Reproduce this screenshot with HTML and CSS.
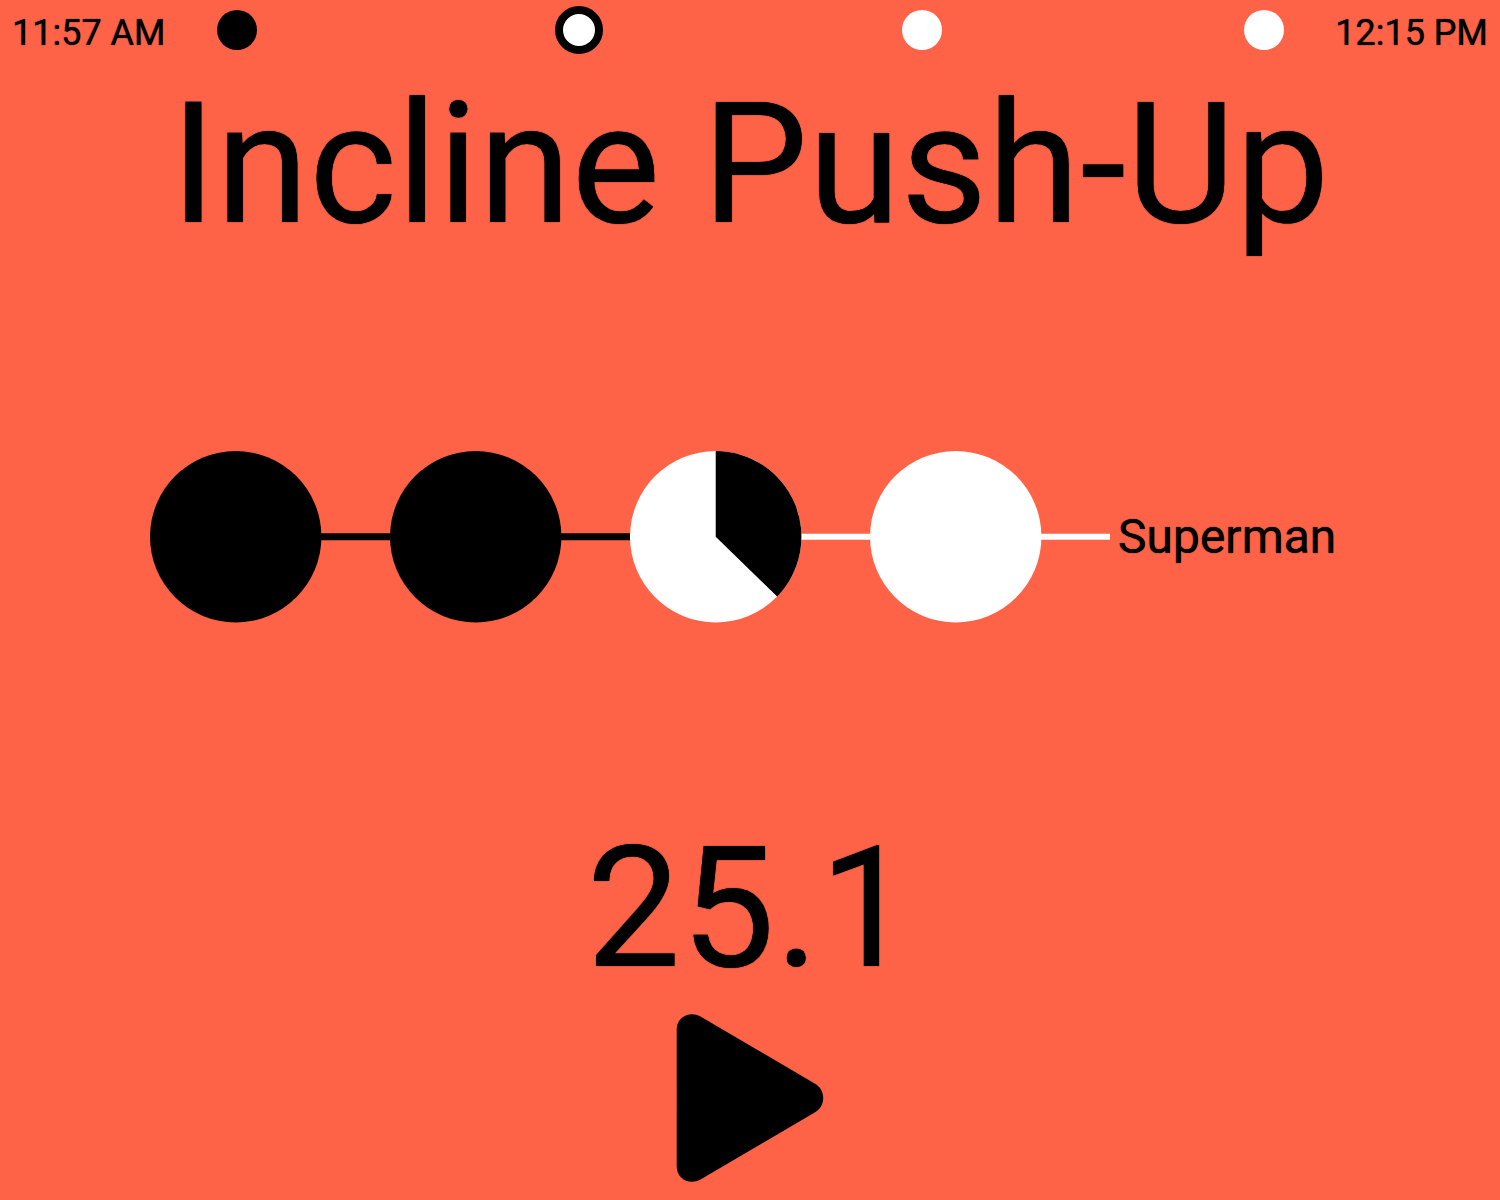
FILE: index.html
```html
<!DOCTYPE html>
<html lang="en">
<head>
<meta charset="utf-8">
<title>Workout timer</title>
<link rel="stylesheet" href="styles.css">
</head>
<body>
<header class="status">
  <time class="clock">11:57 AM</time>
  <ol class="rounds">
    <li class="round done"></li>
    <li class="round current"></li>
    <li class="round"></li>
    <li class="round"></li>
  </ol>
  <time class="clock">12:15 PM</time>
</header>
<main class="workout">
  <h1 class="exercise">Incline Push-Up</h1>
  <section class="sets">
    <svg class="set" viewBox="0 0 280 200" aria-hidden="true">
      <path d="M199 100H280" stroke="#000" stroke-width="8"/>
      <circle cx="100" cy="100" r="100"/>
    </svg>
    <svg class="set" viewBox="0 0 280 200" aria-hidden="true">
      <path d="M199 100H280" stroke="#000" stroke-width="8"/>
      <circle cx="100" cy="100" r="100"/>
    </svg>
    <svg class="set" viewBox="0 0 280 200" aria-hidden="true">
      <path d="M199 100H280" stroke="#fff" stroke-width="7"/>
      <circle cx="100" cy="100" r="100" fill="#fff"/>
      <path d="M100 100V0A100 100 0 0 1 171.700 169.700Z"/>
    </svg>
    <svg class="set" viewBox="0 0 280 200" aria-hidden="true">
      <path d="M199 100H280" stroke="#fff" stroke-width="7"/>
      <circle cx="100" cy="100" r="100" fill="#fff"/>
    </svg>
    <span class="next">Superman</span>
  </section>
  <section class="timer">
    <output class="seconds">25.1</output>
    <button class="play" type="button" aria-label="Start">
      <svg class="play-icon" viewBox="0 0 148 168" aria-hidden="true">
        <path d="M.7 15.500C.7 3 13.500-3.500 24.500 2.500L139.500 70C149.800 76 149.800 92 139.500 98L24.500 165.500C13.500 171.500 .7 165 .7 152.500Z"/>
      </svg>
    </button>
  </section>
</main>
</body>
</html>
```

FILE: styles.css
```css
* {
  box-sizing: border-box;
}

body {
  display: flex;
  flex-direction: column;
  min-height: 100vh;
  margin: 0;
  background: #ff6347;
  color: #000;
  font-family: Roboto, sans-serif;
  text-shadow: 0 0 1px #000;
}

.status {
  display: flex;
  align-items: center;
  justify-content: space-between;
  height: 60px;
  padding: 0 12px;
}

.clock {
  padding-top: 6px;
  font-size: 36px;
  line-height: 42px;
}

.rounds {
  display: flex;
  flex: 1;
  justify-content: space-between;
  align-items: center;
  margin: 0;
  padding: 0 51px;
  list-style: none;
}

.round {
  width: 40px;
  height: 40px;
  border-radius: 50%;
  background: #fff;
}

.done {
  background: #000;
}

.current {
  width: 48px;
  height: 48px;
  margin: 0 -4px;
  border: 8px solid #000;
}

.workout {
  display: flex;
  flex: 1;
  flex-direction: column;
  justify-content: space-between;
}

.exercise {
  margin: 0;
  font-size: 168px;
  font-weight: 400;
  line-height: 210px;
  text-align: center;
}

.sets {
  display: flex;
  align-items: center;
  padding: 0 10%;
}

.set {
  display: block;
  width: 20%;
}

.next {
  flex: 1;
  padding-left: 8px;
  font-size: 48px;
  line-height: 56px;
}

.timer {
  display: flex;
  flex-direction: column;
  align-items: center;
}

.seconds {
  font-size: 168px;
  line-height: 210px;
}

.play {
  padding: 0 0 18px;
  border: 0;
  background: none;
}

.play-icon {
  display: block;
  width: 148px;
}
```
